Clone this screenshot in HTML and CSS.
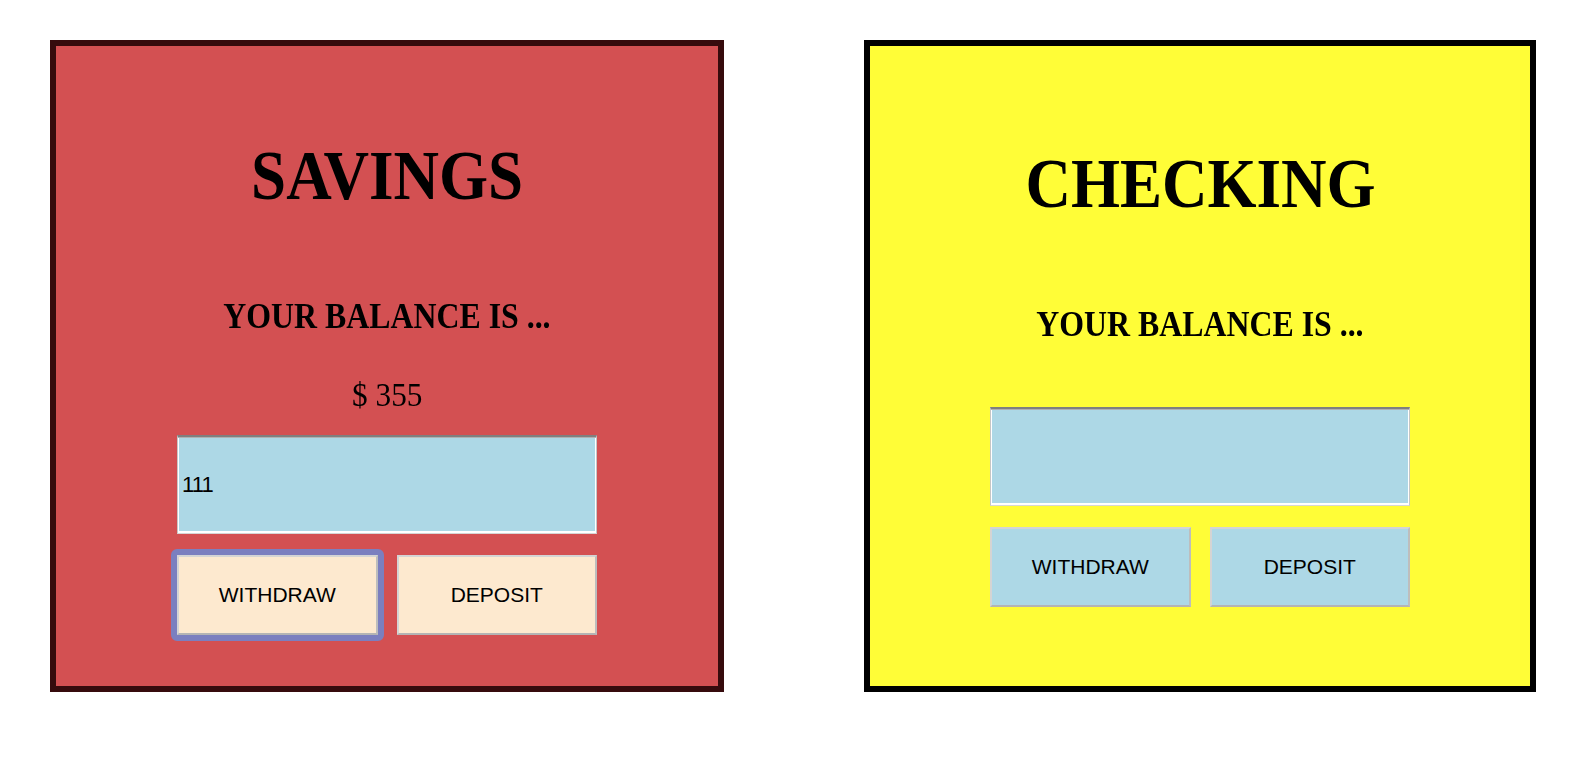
FILE: index.html
```html
<!DOCTYPE html>
<html lang="en">
<head>
<meta charset="utf-8">
<title>Bank Accounts</title>
<link rel="stylesheet" href="styles.css">
</head>
<body>
<main class="accounts">
  <section class="account account--savings">
    <h1 class="account__title">SAVINGS</h1>
    <h3 class="account__label">YOUR BALANCE IS ...</h3>
    <p class="account__amount">$ 355</p>
    <input class="account__input" type="text" value="111">
    <div class="account__actions">
      <button class="account__btn account__btn--focused">WITHDRAW</button>
      <button class="account__btn">DEPOSIT</button>
    </div>
  </section>
  <section class="account account--checking">
    <h1 class="account__title">CHECKING</h1>
    <h3 class="account__label">YOUR BALANCE IS ...</h3>
    <input class="account__input account__input--spaced" type="text" value="">
    <div class="account__actions">
      <button class="account__btn">WITHDRAW</button>
      <button class="account__btn">DEPOSIT</button>
    </div>
  </section>
</main>
</body>
</html>
```

FILE: styles.css
```css
* { box-sizing: border-box; }

html, body {
  margin: 0;
  padding: 0;
  background: #ffffff;
}

body {
  font-family: "Liberation Serif", "Times New Roman", serif;
  color: #000;
}

.accounts {
  display: flex;
  align-items: flex-start;
  gap: 140px;
  padding: 40px 0 0 50px;
}

.account {
  height: 652px;
  border: 6px solid #000;
  display: flex;
  flex-direction: column;
  align-items: center;
}

.account--savings {
  width: 674px;
  background: #d35052;
  border-color: #360b0d;
  padding-top: 96px;
}

.account--checking {
  width: 672px;
  background: #fffd37;
  border-color: #000;
  padding-top: 104px;
}

.account__title {
  margin: 0;
  font-size: 70px;
  line-height: 68px;
  font-weight: bold;
  transform: scaleX(0.9);
}

.account__label {
  margin: 90px 0 0;
  font-size: 35px;
  line-height: 33px;
  font-weight: bold;
  transform: scaleX(0.91);
}

.account__amount {
  margin: 46px 0 24px;
  font-size: 34px;
  line-height: 32px;
  font-weight: normal;
  transform: scaleX(0.92);
}

.account__input {
  width: 420px;
  height: 99px;
  margin: 0;
  padding: 0 0 0 4px;
  background: #add8e6;
  border-style: solid;
  border-width: 2px 1px 1px 1px;
  border-color: #7f7f7f #c6c6c6 #d6d6d6 #c6c6c6;
  box-shadow: inset 0 1px 0 #b0b0b0, inset 1px 0 0 #fff, inset -1px 0 0 #fff, inset 0 -2px 0 #fff;
  font-family: "Liberation Sans", Arial, sans-serif;
  font-size: 22px;
  letter-spacing: -0.8px;
  color: #000;
  outline: none;
}

.account__input--spaced {
  margin-top: 66px;
}

.account__actions {
  width: 420px;
  margin-top: 21px;
  display: flex;
  gap: 19px;
}

.account__btn {
  position: relative;
  flex: 1;
  height: 80px;
  margin: 0;
  padding: 0;
  border: 2px solid;
  border-color: #d4d4d4 #bdbdbd #b4b4b4 #d4d4d4;
  background: #add8e6;
  font-family: "Liberation Sans", Arial, sans-serif;
  font-size: 21px;
  color: #000;
  cursor: pointer;
}

.account--savings .account__btn {
  background: #fde9cf;
}

.account__btn--focused::before {
  content: "";
  position: absolute;
  inset: -8px;
  border: 6px solid #7b7fbf;
  border-radius: 6px;
  filter: blur(0.6px);
  pointer-events: none;
}
```
